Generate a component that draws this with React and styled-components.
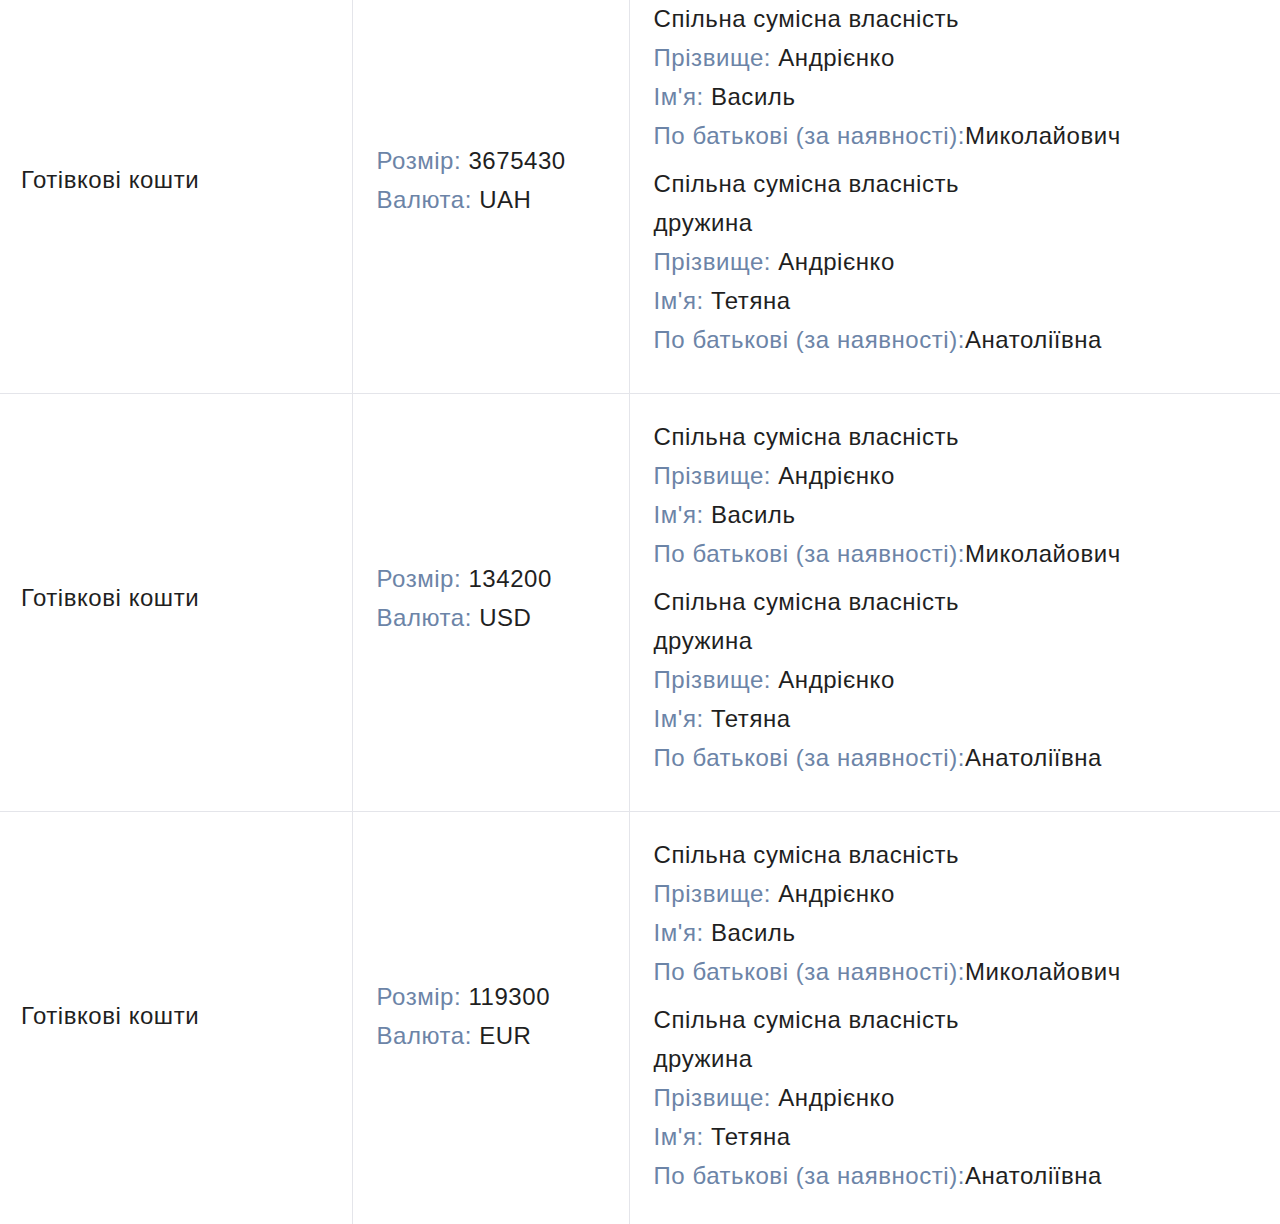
import React from 'react';
import styled, { createGlobalStyle } from 'styled-components';

const GlobalStyle = createGlobalStyle`
  html, body {
    margin: 0;
    padding: 0;
    background: #fff;
  }
  body {
    font-family: 'Liberation Sans', Arial, sans-serif;
    color: #1f1f1f;
    overflow: hidden;
  }
`;

const rows = [
  { type: 'Готівкові кошти', size: '3675430', currency: 'UAH' },
  { type: 'Готівкові кошти', size: '134200', currency: 'USD' },
  { type: 'Готівкові кошти', size: '119300', currency: 'EUR' },
];

const owners = [
  {
    title: 'Спільна сумісна власність',
    surname: 'Андрієнко',
    name: 'Василь',
    patronymic: 'Миколайович',
  },
  {
    title: 'Спільна сумісна власність',
    relation: 'дружина',
    surname: 'Андрієнко',
    name: 'Тетяна',
    patronymic: 'Анатоліївна',
  },
];

const Table = styled.table`
  width: 1280px;
  margin-top: -24px;
  border-collapse: collapse;
  table-layout: fixed;
  font-size: 24px;
  line-height: 39px;
  letter-spacing: 0.55px;
`;

const Row = styled.tr`
  border-bottom: 1px solid #e4e5ea;
`;

const Cell = styled.td`
  vertical-align: middle;
  padding: 23px 24px ${(p) => (p.centered ? '33px' : '25px')}
    ${(p) => (p.first ? '21px' : '24px')};
  border-left: ${(p) => (p.first ? 'none' : '1px solid #e4e5ea')};
  white-space: nowrap;
`;

const Line = styled.div`
  white-space: nowrap;
`;

const Label = styled.span`
  color: #6c84a7;
`;

const OwnerBlock = styled.div`
  margin-bottom: 9px;
`;

const Field = ({ label, value, tight }) => (
  <Line>
    <Label>{label}</Label>
    {tight ? '' : ' '}
    {value}
  </Line>
);

const Owner = ({ owner }) => (
  <OwnerBlock>
    <Line>{owner.title}</Line>
    {owner.relation && <Line>{owner.relation}</Line>}
    <Field label="Прізвище:" value={owner.surname} />
    <Field label="Ім'я:" value={owner.name} />
    <Field label="По батькові (за наявності):" value={owner.patronymic} tight />
  </OwnerBlock>
);

const App = () => (
  <>
    <GlobalStyle />
    <Table>
      <colgroup>
        <col style={{ width: 352 }} />
        <col style={{ width: 277 }} />
        <col />
      </colgroup>
      <tbody>
        {rows.map((r, i) => (
          <Row key={i}>
            <Cell first centered>
              {r.type}
            </Cell>
            <Cell centered>
              <Field label="Розмір:" value={r.size} />
              <Field label="Валюта:" value={r.currency} />
            </Cell>
            <Cell>
              {owners.map((o, j) => (
                <Owner key={j} owner={o} />
              ))}
            </Cell>
          </Row>
        ))}
      </tbody>
    </Table>
  </>
);

export default App;
